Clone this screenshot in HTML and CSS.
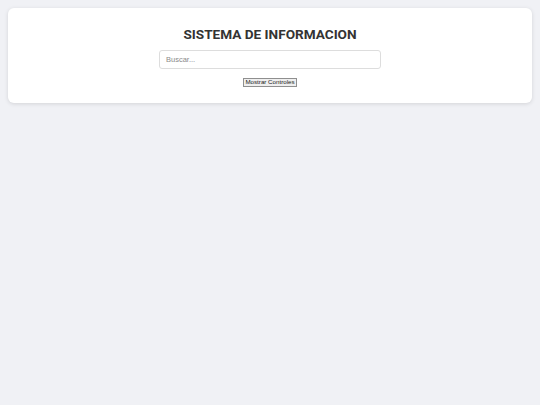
FILE: index.html
```html
<!DOCTYPE html>
<html lang="es">
<head>
<meta charset="utf-8">
<title>Sistema de Informacion</title>
<link rel="stylesheet" href="styles.css">
</head>
<body>
<div class="card">
  <h1 class="title">SISTEMA DE INFORMACION</h1>
  <input class="search" type="text" placeholder="Buscar...">
  <div class="actions">
    <button class="toggle" type="button">Mostrar Controles</button>
  </div>
</div>
</body>
</html>
```
FILE: styles.css
```css
html, body {
  margin: 0;
  padding: 0;
}
body {
  background: #f0f1f5;
  padding: 8px;
  font-family: Roboto, "Liberation Sans", Arial, sans-serif;
  min-height: 405px;
  box-sizing: border-box;
}
.card {
  background: #ffffff;
  border-radius: 6px;
  box-shadow: 0 1px 4px rgba(0, 0, 0, 0.12);
  padding: 17px 16px 16px;
  display: flex;
  flex-direction: column;
  align-items: center;
}
.title {
  margin: 0;
  font-size: 13.6px;
  line-height: 19px;
  font-weight: 700;
  color: #333333;
}
.search {
  margin-top: 6px;
  width: 222px;
  height: 19px;
  box-sizing: border-box;
  border: 1px solid #dddddd;
  border-radius: 3px;
  padding: 0 6px;
  font-family: "Liberation Sans", Arial, sans-serif;
  font-size: 7.5px;
  color: #333;
  outline: none;
}
.search::placeholder {
  color: #8a8a8a;
}
.actions {
  margin-top: 9px;
  display: flex;
  justify-content: center;
}
.toggle {
  font-family: "Liberation Sans", Arial, sans-serif;
  font-size: 6.2px;
  font-weight: 400;
  height: 9px;
  line-height: 1;
  padding: 0 1px;
  border: 1px solid #8f8f8f;
  border-radius: 0;
  background: #efefef;
  color: #222;
}
```
